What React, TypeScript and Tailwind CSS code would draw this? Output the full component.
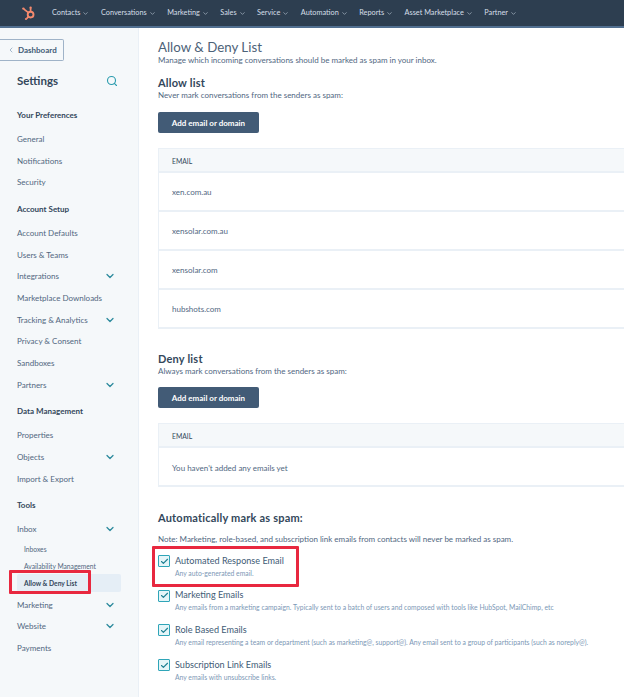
import { ChevronDown, ChevronLeft, Search, Check } from "lucide-react";

const topNav = ["Contacts", "Conversations", "Marketing", "Sales", "Service", "Automation", "Reports", "Asset Marketplace", "Partner"];

type SideItem = { label: string; arrow?: boolean };

const preferences: SideItem[] = [{ label: "General" }, { label: "Notifications" }, { label: "Security" }];
const accountSetup: SideItem[] = [
  { label: "Account Defaults" },
  { label: "Users & Teams" },
  { label: "Integrations", arrow: true },
  { label: "Marketplace Downloads" },
  { label: "Tracking & Analytics", arrow: true },
  { label: "Privacy & Consent" },
  { label: "Sandboxes" },
  { label: "Partners", arrow: true },
];
const dataManagement: SideItem[] = [{ label: "Properties" }, { label: "Objects", arrow: true }, { label: "Import & Export" }];

const allowed = ["xen.com.au", "xensolar.com.au", "xensolar.com", "hubshots.com"];

const spamTypes = [
  { title: "Automated Response Email", text: "Any auto-generated email." },
  { title: "Marketing Emails", text: "Any emails from a marketing campaign. Typically sent to a batch of users and composed with tools like HubSpot, MailChimp, etc" },
  { title: "Role Based Emails", text: "Any email representing a team or department (such as marketing@, support@). Any email sent to a group of participants (such as noreply@)." },
  { title: "Subscription Link Emails", text: "Any emails with unsubscribe links." },
];

function SideRow({ label, arrow }: SideItem) {
  return (
    <div className="flex h-[21.7px] items-center justify-between pr-[22px] text-[8px] text-[#51677f]">
      <span className="whitespace-nowrap">{label}</span>
      {arrow && <ChevronDown size={12} strokeWidth={2.5} className="text-[#2b8a9c]" />}
    </div>
  );
}

function SideHeading({ label }: { label: string }) {
  return <div className="flex h-[18px] items-center text-[8px] font-bold text-[#33475b]">{label}</div>;
}

function EmailTableHead() {
  return (
    <div className="flex h-[24px] items-center border-b-2 border-[#eaf0f6] bg-[#f5f8fa] pl-[13px] pt-[2px] text-[6.8px] text-[#33475b]">
      EMAIL
    </div>
  );
}

function AddButton() {
  return (
    <button className="flex h-[21px] w-[101px] items-center justify-center rounded-[2px] bg-[#425b76] text-[8px] font-bold text-white">
      Add email or domain
    </button>
  );
}

export default function App() {
  return (
    <div className="relative h-[697px] w-[624px] overflow-hidden bg-white font-['Lato',sans-serif]">
      {/* top bar */}
      <div className="flex h-[28px] items-center border-b-2 border-[#516f90] bg-[#2d3e50] pl-[21px]">
        <svg width="16" height="16" viewBox="0 0 16 16" fill="none" className="mr-[15px] shrink-0">
          <circle cx="9.6" cy="9.6" r="2.9" stroke="#f58a6e" strokeWidth="1.9" />
          <path d="M9.6 6.7V3.6M7.4 7.7 2.9 4.2M7.6 11.6 5.6 13.6" stroke="#f58a6e" strokeWidth="1.7" />
          <circle cx="9.6" cy="2.7" r="1.2" fill="#f58a6e" />
          <circle cx="2.4" cy="3.6" r="1.2" fill="#f58a6e" />
          <circle cx="5" cy="14" r="1.1" fill="#f58a6e" />
        </svg>
        <div className="flex gap-[11.5px]">
          {topNav.map((n) => (
            <div key={n} className="flex items-center gap-[2px] whitespace-nowrap text-[7.3px] text-[#d5dee8]">
              {n}
              <ChevronDown size={7} className="text-[#c5d1dd]" />
            </div>
          ))}
        </div>
      </div>

      <div className="flex h-[669px]">
        {/* sidebar */}
        <aside className="w-[139px] shrink-0 border-r border-[#eaf0f6] bg-[#f5f8fa]">
          <div className="mt-[11px] flex h-[22px] w-[64px] items-center gap-[3px] rounded-r-[2px] border border-l-0 border-[#9fb3c8] bg-[#f5f8fa] pl-[7px] text-[8px] font-bold text-[#425b76]">
            <ChevronLeft size={8} className="text-[#7c98b6]" />
            Dashboard
          </div>
          <div className="pl-[17px]">
            <div className="mt-[10px] flex h-[20px] items-center justify-between pr-[20px]">
              <span className="text-[11.5px] font-bold text-[#33475b]">Settings</span>
              <Search size={12} strokeWidth={2.25} className="text-[#2b9cae]" />
            </div>
            <div className="mt-[15px]"><SideHeading label="Your Preferences" /></div>
            <div className="mt-[4px]">{preferences.map((i) => <SideRow key={i.label} {...i} />)}</div>
            <div className="mt-[7px]"><SideHeading label="Account Setup" /></div>
            <div className="mt-[4px]">{accountSetup.map((i) => <SideRow key={i.label} {...i} />)}</div>
            <div className="mt-[6px]"><SideHeading label="Data Management" /></div>
            <div className="mt-[5px]">{dataManagement.map((i) => <SideRow key={i.label} {...i} />)}</div>
            <div className="mt-[6px]"><SideHeading label="Tools" /></div>
            <div className="mt-[5px]"><SideRow label="Inbox" arrow /></div>
            <div className="pl-[7px] text-[6.7px] text-[#51677f]">
              <div className="flex h-[17px] items-center">Inboxes</div>
              <div className="flex h-[16.5px] items-center">Availability Management</div>
              <div className="-ml-[7px] mr-[17px] flex h-[18px] items-center rounded-[2px] bg-[#e5eef6] pl-[7px] font-bold text-[#33475b]">Allow &amp; Deny List</div>
            </div>
            <div className="mt-[2px]">
              <SideRow label="Marketing" arrow />
              <SideRow label="Website" arrow />
              <SideRow label="Payments" />
            </div>
          </div>
        </aside>

        {/* main */}
        <main className="min-w-0 flex-1 pl-[19px]">
          <h1 className="mt-[12px] text-[13.3px] leading-[14px] text-[#4d6278]">Allow &amp; Deny List</h1>
          <p className="text-[8px] leading-[12px] text-[#51677f]">Manage which incoming conversations should be marked as spam in your inbox.</p>

          <h2 className="mt-[9px] text-[11px] font-bold leading-[16px] tracking-[0.2px] text-[#33475b]">Allow list</h2>
          <p className="text-[8px] leading-[9px] text-[#51677f]">Never mark conversations from the senders as spam:</p>
          <div className="mt-[12px]"><AddButton /></div>

          <div className="mt-[15px] border-l border-t border-[#eaf0f6]">
            <EmailTableHead />
            {allowed.map((e) => (
              <div key={e} className="flex h-[39px] items-center border-b-2 border-[#eaf0f6] pl-[13px] text-[8px] text-[#51677f]">
                {e}
              </div>
            ))}
          </div>

          <h2 className="mt-[22px] text-[11px] font-bold leading-[16px] tracking-[0.2px] text-[#33475b]">Deny list</h2>
          <p className="text-[8px] leading-[9px] text-[#51677f]">Always mark conversations from the senders as spam:</p>
          <div className="mt-[11px]"><AddButton /></div>

          <div className="mt-[15px] border-l border-t border-[#eaf0f6]">
            <EmailTableHead />
            <div className="flex h-[39px] items-center border-b-2 border-[#eaf0f6] pl-[13px] pt-[2px] text-[8px] text-[#51677f]">
              You haven't added any emails yet
            </div>
          </div>

          <h2 className="mt-[23px] text-[11px] font-bold leading-[16px] tracking-[0.2px] text-[#33475b]">Automatically mark as spam:</h2>
          <p className="mt-[7px] whitespace-nowrap text-[8px] leading-[12px] text-[#51677f]">
            Note: Marketing, role-based, and subscription link emails from contacts will never be marked as spam.
          </p>
          <div className="mt-[5.5px]">
            {spamTypes.map((s) => (
              <div key={s.title} className="flex h-[34.7px] gap-[5px] pt-[3px]">
                <div className="mt-[1.5px] flex h-[12px] w-[12px] shrink-0 items-center justify-center rounded-[1px] border-[1.5px] border-[#2fa5b8] bg-[#e5f5f8]">
                  <Check size={9} strokeWidth={3} className="text-[#1d7f92]" />
                </div>
                <div className="min-w-0">
                  <div className="whitespace-nowrap text-[9.1px] leading-[13px] text-[#425b76]">{s.title}</div>
                  <div className="mt-[1px] whitespace-nowrap text-[6.8px] leading-[11px] text-[#7c98b6]">{s.text}</div>
                </div>
              </div>
            ))}
          </div>
        </main>
      </div>

      {/* red annotation boxes drawn over the screenshot */}
      <div className="absolute left-[9px] top-[570px] h-[24px] w-[82px] rounded-[1px] border-[3px] border-[#e8283f]" />
      <div className="absolute left-[152px] top-[546px] h-[41px] w-[147px] rounded-[1px] border-[3px] border-[#e8283f]" />
    </div>
  );
}
